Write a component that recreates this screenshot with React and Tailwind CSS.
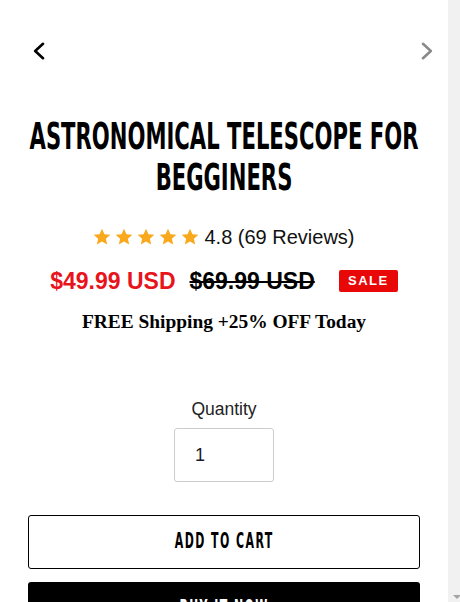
import React, { useState } from 'react';

const narrow = { fontFamily: "'Liberation Sans Narrow', 'DejaVu Sans Condensed', 'Liberation Sans', sans-serif" };

const Star = () => (
  <svg width="18" height="18" viewBox="0 0 24 24" className="shrink-0">
    <path
      fill="#f8a91e"
      d="M12 1l3.3 7.2 7.8.8-5.9 5.3 1.7 7.8L12 18.1l-6.9 4 1.7-7.8L.9 9l7.8-.8z"
    />
  </svg>
);

const Chevron = ({ dir, color }) => (
  <svg width="13" height="18" viewBox="0 0 13 18" fill="none">
    <polyline
      points={dir === 'left' ? '11,1.8 3.2,9 11,16.2' : '2,1.8 9.8,9 2,16.2'}
      stroke={color}
      strokeWidth="2.6"
      strokeLinecap="round"
      strokeLinejoin="round"
    />
  </svg>
);

const App = () => {
  const [qty, setQty] = useState('1');

  return (
    <div className="flex h-screen overflow-hidden bg-white" style={{ fontFamily: "'Liberation Sans', Arial, sans-serif" }}>
      <div className="flex-1 min-w-0 flex flex-col">
        {/* gallery nav */}
        <div className="flex justify-between pl-[32px] pr-[14px] pt-[42px]">
          <Chevron dir="left" color="#000" />
          <Chevron dir="right" color="#8a8a8a" />
        </div>

        {/* title */}
        <h1
          className="mt-[56px] min-w-0 flex flex-col items-center text-[37px] leading-[41px] font-bold text-black scale-x-[0.635]"
          style={narrow}
        >
          <span className="whitespace-nowrap">ASTRONOMICAL TELESCOPE FOR</span>
          <span className="whitespace-nowrap">BEGGINERS</span>
        </h1>

        {/* rating */}
        <div className="mt-[27px] flex items-center justify-center h-[24px]">
          <div className="flex gap-[4px] mr-[5px]">
            <Star />
            <Star />
            <Star />
            <Star />
            <Star />
          </div>
          <span className="text-[20px] leading-[24px] text-[#111]">4.8 (69 Reviews)</span>
        </div>

        {/* price */}
        <div className="mt-[18px] flex items-center justify-center h-[28px]">
          <span className="text-[23px] leading-[28px] font-bold text-[#e8141c]">$49.99 USD</span>
          <span className="ml-[14px] text-[23px] leading-[28px] font-bold text-black line-through decoration-2">
            $69.99 USD
          </span>
          <span className="ml-[24px] w-[59px] h-[22px] rounded-[2px] bg-[#e80808] text-white text-[13px] font-bold tracking-[1.5px] flex items-center justify-center">
            SALE
          </span>
        </div>

        {/* promo */}
        <p
          className="mt-[15px] text-center text-[19.4px] leading-[24px] font-bold text-black"
          style={{ fontFamily: "'Liberation Serif', 'Times New Roman', serif" }}
        >
          FREE Shipping +25% OFF Today
        </p>

        {/* quantity */}
        <label className="mt-[65px] text-center text-[17.5px] leading-[20px] text-[#222]">Quantity</label>
        <div className="mt-[9px] flex justify-center">
          <input
            value={qty}
            onChange={(e) => setQty(e.target.value)}
            className="w-[100px] h-[54px] border border-[#cccccc] rounded-[3px] pl-[20px] text-[18px] text-[#1a1a2a] outline-none"
          />
        </div>

        {/* buttons */}
        <div className="mt-[33px] mx-[28px] flex flex-col gap-[13px]">
          <button className="h-[54px] border border-black rounded-[3px] bg-white flex items-center justify-center">
            <span
              className="text-[21px] font-bold text-black tracking-[2.5px] scale-x-[0.58] whitespace-nowrap"
              style={narrow}
            >
              ADD TO CART
            </span>
          </button>
          <button className="h-[54px] rounded-[3px] bg-black flex items-center justify-center">
            <span
              className="text-[21px] font-bold text-white tracking-[2.5px] scale-x-[0.58] whitespace-nowrap"
              style={narrow}
            >
              BUY IT NOW
            </span>
          </button>
        </div>
      </div>

      {/* scrollbar strip */}
      <div className="w-[12px] shrink-0 bg-[#f1f1f1] flex flex-col justify-end items-end">
        <div className="mb-[3px] w-0 h-0 border-l-[4px] border-r-[4px] border-t-[4px] border-l-transparent border-r-transparent border-t-[#a3a3a3] mr-[-1px]" />
      </div>
    </div>
  );
};

export default App;
